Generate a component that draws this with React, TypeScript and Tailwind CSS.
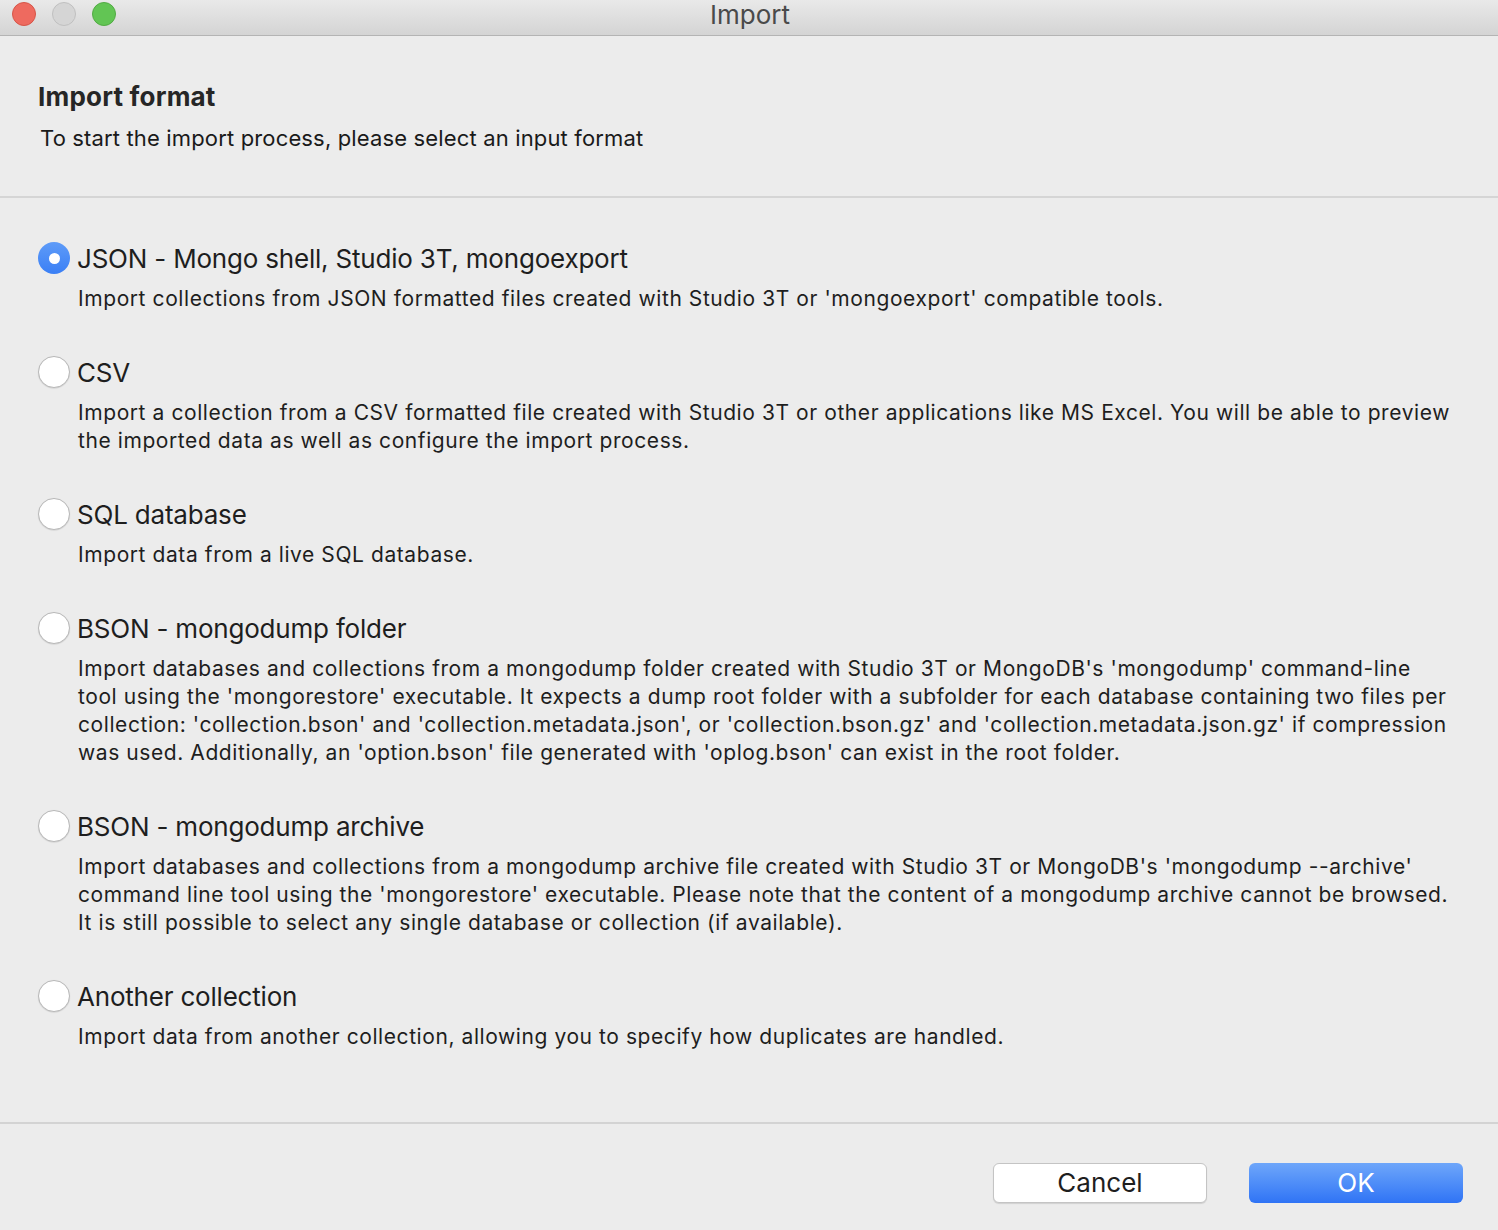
import React from "react";

const options = [
  {
    title: "JSON - Mongo shell, Studio 3T, mongoexport",
    desc: "Import collections from JSON formatted files created with Studio 3T or 'mongoexport' compatible tools.",
    checked: true,
  },
  {
    title: "CSV",
    desc: "Import a collection from a CSV formatted file created with Studio 3T or other applications like MS Excel. You will be able to preview the imported data as well as configure the import process.",
  },
  { title: "SQL database", desc: "Import data from a live SQL database." },
  {
    title: "BSON - mongodump folder",
    desc: "Import databases and collections from a mongodump folder created with Studio 3T or MongoDB's 'mongodump' command-line tool using the 'mongorestore' executable. It expects a dump root folder with a subfolder for each database containing two files per collection: 'collection.bson' and 'collection.metadata.json', or 'collection.bson.gz' and 'collection.metadata.json.gz' if compression was used. Additionally, an 'option.bson' file generated with 'oplog.bson' can exist in the root folder.",
  },
  {
    title: "BSON - mongodump archive",
    desc: "Import databases and collections from a mongodump archive file created with Studio 3T or MongoDB's 'mongodump --archive' command line tool using the 'mongorestore' executable. Please note that the content of a mongodump archive cannot be browsed. It is still possible to select any single database or collection (if available).",
  },
  {
    title: "Another collection",
    desc: "Import data from another collection, allowing you to specify how duplicates are handled.",
  },
];

function Radio({ checked }: { checked?: boolean }) {
  if (checked) {
    return (
      <div className="w-[32px] h-[32px] rounded-full bg-gradient-to-b from-[#5e9bf8] to-[#3a7ff5] flex items-center justify-center shrink-0">
        <div className="w-[11px] h-[11px] rounded-full bg-white" />
      </div>
    );
  }
  return (
    <div className="w-[32px] h-[32px] rounded-full bg-white border border-[#b8b8b8] shadow-[0_0.5px_1px_rgba(0,0,0,0.15)] shrink-0" />
  );
}

export default function App() {
  return (
    <div
      className="w-[1498px] h-[1230px] bg-[#ececec] flex flex-col text-[#1e1e1e]"
      style={{ fontFamily: "Inter, 'Noto Sans', 'Liberation Sans', sans-serif" }}
    >
      {/* Title bar */}
      <div className="h-[36px] shrink-0 bg-gradient-to-b from-[#e9e9e9] to-[#d4d4d4] border-b border-[#b4b4b4] relative flex items-center justify-center">
        <div className="absolute left-[12px] top-[2px] flex gap-[16px]">
          <div className="w-[24px] h-[24px] rounded-full bg-[#ee6a5f] border border-[#d65548]" />
          <div className="w-[24px] h-[24px] rounded-full bg-[#d5d5d5] border border-[#c0c0c0]" />
          <div className="w-[24px] h-[24px] rounded-full bg-[#62c554] border border-[#52ab44]" />
        </div>
        <div className="text-[26px] leading-[30px] text-[#4a4a4a] -mt-[6px] ml-[2px]">Import</div>
      </div>

      {/* Header */}
      <div className="pt-[45px] pb-[44px] pl-[38px] border-b-2 border-[#d5d5d5]">
        <div className="text-[26px] leading-[32px] font-bold text-[#262626] tracking-[0.2px]">Import format</div>
        <div className="mt-[11px] ml-[2px] text-[22px] leading-[28px] text-[#1a1a1a] tracking-[0.15px]">
          To start the import process, please select an input format
        </div>
      </div>

      {/* Options */}
      <div className="flex-1 pt-[44px] pl-[38px] pr-[46px] flex flex-col gap-[43px]">
        {options.map((o) => (
          <div key={o.title} className="flex flex-col">
            <div className="flex items-center gap-[7px] h-[32px]">
              <Radio checked={o.checked} />
              <div className="text-[26px] leading-[32px] text-[#1e1e1e] mt-[1px] tracking-[-0.2px]">{o.title}</div>
            </div>
            <div className="mt-[11px] ml-[40px] text-[21px] leading-[28px] text-[#1e1e1e] tracking-[0.58px]">{o.desc}</div>
          </div>
        ))}
      </div>

      {/* Footer */}
      <div className="h-[108px] shrink-0 border-t-2 border-[#d3d3d3] flex justify-end items-start pt-[39px] pr-[35px] gap-[42px]">
        <button className="w-[214px] h-[40px] rounded-[6px] bg-white border border-[#c4c4c4] shadow-[0_1px_1px_rgba(0,0,0,0.12)] text-[26px] leading-[30px] text-[#1e1e1e]">
          Cancel
        </button>
        <button className="w-[214px] h-[40px] rounded-[6px] bg-gradient-to-b from-[#6ea6fa] to-[#2f73f5] text-[26px] leading-[30px] text-white">
          OK
        </button>
      </div>
    </div>
  );
}
